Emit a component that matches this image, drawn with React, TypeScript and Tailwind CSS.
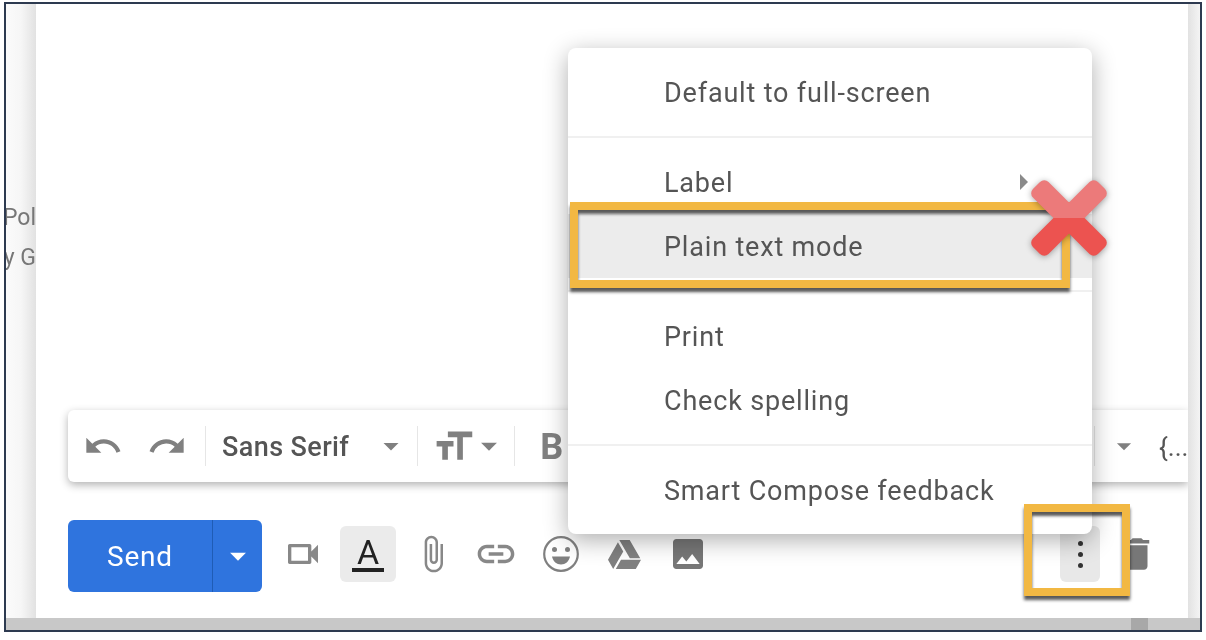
import React from "react";
import { FaGoogleDrive } from "react-icons/fa";
import {
  MdArrowDropDown,
  MdAttachFile,
  MdDelete,
  MdFormatSize,
  MdInsertPhoto,
  MdLink,
  MdOutlineVideocam,
  MdRedo,
  MdUndo,
} from "react-icons/md";

const font = "font-['Roboto',sans-serif]";

const MenuRow = ({ label, active, arrow }: { label: string; active?: boolean; arrow?: boolean }) => (
  <div className={`relative flex h-16 items-center pl-24 pt-[2px] text-[27px] tracking-[0.82px] text-[#555] ${active ? "bg-[#ececec]" : ""}`}>
    {label}
    {arrow && <div className="absolute left-[452px] top-[24px] h-0 w-0 border-y-[8px] border-l-[8px] border-y-transparent border-l-[#8a8a8a]" />}
  </div>
);

const Sep = () => <div className="my-3 h-[2px] bg-[#f0f0f0]" />;

const ToolSep = () => <div className="h-10 w-px bg-[#e6e6e6]" />;

const Smiley = () => (
  <svg viewBox="0 0 36 36" className="h-9 w-9" fill="none">
    <circle cx="18" cy="18" r="16.8" stroke="#808080" strokeWidth="2.2" />
    <circle cx="11.5" cy="13.5" r="2.5" fill="#808080" />
    <circle cx="24.5" cy="13.5" r="2.5" fill="#808080" />
    <path d="M9 20.5h18c-1 5-4.6 8-9 8s-8-3-9-8z" fill="#808080" />
  </svg>
);

const RedCross = () => (
  <svg viewBox="0 0 90 90" className="h-[90px] w-[90px] drop-shadow-[0_1px_3px_rgba(0,0,0,0.35)]">
    <defs>
      <clipPath id="crossTop">
        <rect x="0" y="0" width="90" height="45" />
      </clipPath>
      <clipPath id="crossBottom">
        <rect x="0" y="45" width="90" height="45" />
      </clipPath>
    </defs>
    <g clipPath="url(#crossBottom)" fill="#ec5350">
      <rect x="-1" y="34" width="92" height="22" rx="6" transform="rotate(45 45 45)" />
      <rect x="-1" y="34" width="92" height="22" rx="6" transform="rotate(-45 45 45)" />
    </g>
    <g clipPath="url(#crossTop)" fill="#ec7a7a">
      <rect x="-1" y="34" width="92" height="22" rx="6" transform="rotate(45 45 45)" />
      <rect x="-1" y="34" width="92" height="22" rx="6" transform="rotate(-45 45 45)" />
    </g>
  </svg>
);

export default function App() {
  return (
    <div className={`h-[640px] w-[1206px] overflow-hidden bg-white pl-1 pt-[2px] ${font} blur-[0.7px]`}>
      <div className="relative flex h-[630px] w-[1198px] flex-col border-2 border-[#2d3a50]">
        <div className="flex min-h-0 flex-1">
          {/* left gutter */}
          <div className="flex w-[30px] flex-col items-end overflow-hidden whitespace-nowrap bg-gradient-to-r from-[#fbfbfb] via-[#f6f6f6] to-[#e2e2e2] pt-[194px] text-[23px] leading-10 text-[#777]">
            <div>Pol</div>
            <div>y G</div>
          </div>

          {/* compose area */}
          <div className="flex min-w-0 flex-1 flex-col justify-end bg-white pl-8">
            <div className="flex h-[72px] items-center rounded-l-md bg-white pl-[15px] shadow-[0_3px_8px_rgba(0,0,0,0.3)] text-[#808080]">
              <MdUndo size={40} />
              <MdRedo size={40} className="ml-[24px]" />
              <div className="ml-[18px]"><ToolSep /></div>
              <span className="ml-[16px] pt-[2px] text-[27px] font-medium tracking-[0.4px] text-[#555]">Sans Serif</span>
              <MdArrowDropDown size={36} className="ml-[24px]" />
              <div className="ml-[8px]"><ToolSep /></div>
              <MdFormatSize size={45} className="ml-[13px]" />
              <MdArrowDropDown size={38} className="-ml-[6px]" />
              <div className="ml-[6px]"><ToolSep /></div>
              <span className="ml-[25px] pt-[2px] text-[36px] font-bold">B</span>
              <div className="flex-1" />
              <ToolSep />
              <div className="ml-[12px]"><MdArrowDropDown size={34} /></div>
              <span className="ml-[18px] w-[29px] overflow-hidden whitespace-nowrap pt-[2px] text-[26px] text-[#555]">{"{..."}</span>
            </div>

            <div className="mb-[26px] mt-[38px] flex h-[72px] items-center pb-1">
              <div className="flex h-[72px] w-[194px] self-start rounded-md bg-[#2f74de] text-white">
                <div className="flex w-[145px] items-center justify-center border-r border-[#1f5cb5] pt-[2px] text-[28px] tracking-[0.8px]">Send</div>
                <div className="flex flex-1 items-center justify-center">
                  <MdArrowDropDown size={38} />
                </div>
              </div>
              <MdOutlineVideocam size={40} className="ml-[21px] text-[#888]" />
              <div className="ml-[17px] flex h-14 w-14 flex-col items-center justify-center rounded-md bg-[#ebebeb] text-[#222]">
                <span className="text-[34px] leading-[30px]">A</span>
                <div className="mt-[1px] h-[4px] w-8 bg-[#222]" />
              </div>
              <MdAttachFile size={40} className="ml-[17px] text-[#888]" />
              <MdLink size={44} className="ml-[21px] text-[#888]" />
              <div className="ml-[25px]"><Smiley /></div>
              <FaGoogleDrive size={33} className="ml-[29px] text-[#808080]" />
              <MdInsertPhoto size={40} className="ml-[27px] text-[#777]" />
              <div className="flex-1" />
              <div className="flex h-14 w-10 flex-col items-center justify-center gap-[6px] rounded-md bg-[#e8e8e8]">
                <div className="h-[5px] w-[5px] rounded-full bg-[#333]" />
                <div className="h-[5px] w-[5px] rounded-full bg-[#333]" />
                <div className="h-[5px] w-[5px] rounded-full bg-[#333]" />
              </div>
              <MdDelete size={42} className="ml-[16px] mr-[30px] text-[#777]" />
            </div>
          </div>

          {/* right gutter */}
          <div className="w-[12px] bg-gradient-to-r from-[#e2e2e2] to-[#f4f4f4]" />
        </div>

        {/* bottom scrollbar strip */}
        <div className="flex h-3 bg-[#c8c8c8] pl-[1125px]">
          <div className="h-3 w-[17px] bg-[#a8a8a8]" />
        </div>

        {/* more options menu */}
        <div className="absolute left-[562px] top-[44px] w-[524px] rounded-lg bg-white py-3 shadow-[0_6px_24px_rgba(0,0,0,0.32)]">
          <MenuRow label="Default to full-screen" />
          <Sep />
          <MenuRow label="Label" arrow />
          <MenuRow label="Plain text mode" active />
          <Sep />
          <MenuRow label="Print" />
          <MenuRow label="Check spelling" />
          <Sep />
          <MenuRow label="Smart Compose feedback" />
        </div>

        {/* annotations */}
        <div className="absolute left-[564px] top-[198px] h-[86px] w-[500px] border-8 border-[#f2b843] shadow-[0_4px_3px_rgba(0,0,0,0.65),inset_0_4px_3px_rgba(0,0,0,0.65)]" />
        <div className="absolute left-[1018px] top-[500px] h-[92px] w-[106px] border-8 border-[#f2b843] shadow-[0_4px_3px_rgba(0,0,0,0.65),inset_0_4px_3px_rgba(0,0,0,0.65)]" />
        <div className="absolute left-[1018px] top-[169px]"><RedCross /></div>
      </div>
    </div>
  );
}
